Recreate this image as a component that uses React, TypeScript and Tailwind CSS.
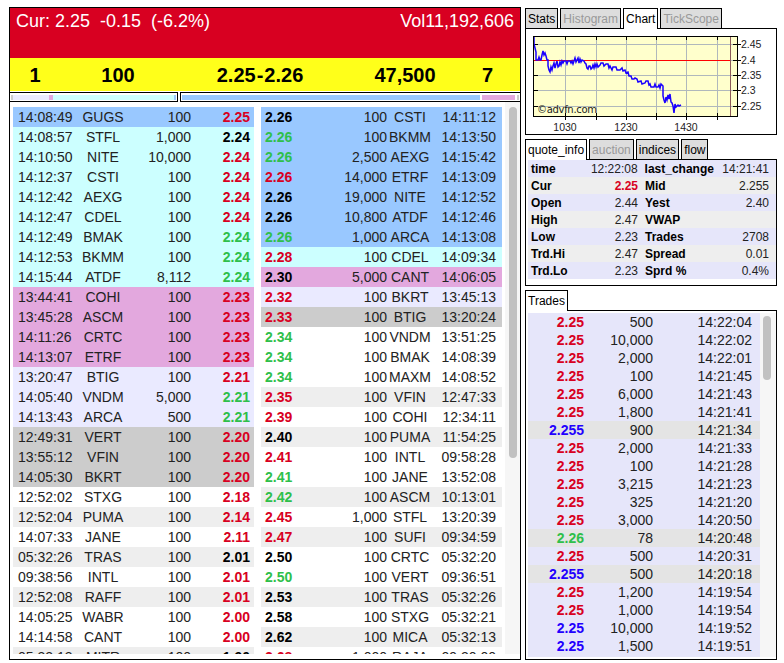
const FONT = "font-['Liberation_Sans',Arial,sans-serif]";

const RED = "text-[#d80021]";
const GREEN = "text-[#2fbf4a]";
const BLACK = "text-black";
const BLUE = "text-[#2200ff]";

const CYAN = "bg-[#ccffff]";
const SKY = "bg-[#99c8ff]";
const PINK = "bg-[#e3a8de]";
const LAV = "bg-[#eaeaff]";
const GREY = "bg-[#cccccc]";
const OFF = "bg-[#eeeeee]";
const WHITE = "bg-white";

type Row = [string, string, string, string, string, string];

const bids: Row[] = [
  ["14:08:49", "GUGS", "100", "2.25", RED, SKY],
  ["14:08:57", "STFL", "1,000", "2.24", BLACK, CYAN],
  ["14:10:50", "NITE", "10,000", "2.24", RED, CYAN],
  ["14:12:37", "CSTI", "100", "2.24", RED, CYAN],
  ["14:12:42", "AEXG", "100", "2.24", RED, CYAN],
  ["14:12:47", "CDEL", "100", "2.24", RED, CYAN],
  ["14:12:49", "BMAK", "100", "2.24", GREEN, CYAN],
  ["14:12:53", "BKMM", "100", "2.24", GREEN, CYAN],
  ["14:15:44", "ATDF", "8,112", "2.24", GREEN, CYAN],
  ["13:44:41", "COHI", "100", "2.23", RED, PINK],
  ["13:45:28", "ASCM", "100", "2.23", RED, PINK],
  ["14:11:26", "CRTC", "100", "2.23", RED, PINK],
  ["14:13:07", "ETRF", "100", "2.23", RED, PINK],
  ["13:20:47", "BTIG", "100", "2.21", RED, LAV],
  ["14:05:40", "VNDM", "5,000", "2.21", GREEN, LAV],
  ["14:13:43", "ARCA", "500", "2.21", GREEN, LAV],
  ["12:49:31", "VERT", "100", "2.20", RED, GREY],
  ["13:55:12", "VFIN", "100", "2.20", RED, GREY],
  ["14:05:30", "BKRT", "100", "2.20", RED, GREY],
  ["12:52:02", "STXG", "100", "2.18", RED, WHITE],
  ["12:52:04", "PUMA", "100", "2.14", RED, OFF],
  ["14:07:33", "JANE", "100", "2.11", RED, WHITE],
  ["05:32:26", "TRAS", "100", "2.01", BLACK, OFF],
  ["09:38:56", "INTL", "100", "2.01", RED, WHITE],
  ["12:52:08", "RAFF", "100", "2.01", RED, OFF],
  ["14:05:25", "WABR", "100", "2.00", RED, WHITE],
  ["14:14:58", "CANT", "100", "2.00", RED, WHITE],
  ["05:32:13", "MITR", "100", "1.90", BLACK, OFF],
];

const asks: Row[] = [
  ["2.26", "100", "CSTI", "14:11:12", BLACK, SKY],
  ["2.26", "100", "BKMM", "14:13:50", GREEN, SKY],
  ["2.26", "2,500", "AEXG", "14:15:42", GREEN, SKY],
  ["2.26", "14,000", "ETRF", "14:13:09", RED, SKY],
  ["2.26", "19,000", "NITE", "14:12:52", BLACK, SKY],
  ["2.26", "10,800", "ATDF", "14:12:46", BLACK, SKY],
  ["2.26", "1,000", "ARCA", "14:13:08", GREEN, SKY],
  ["2.28", "100", "CDEL", "14:09:34", RED, CYAN],
  ["2.30", "5,000", "CANT", "14:06:05", BLACK, PINK],
  ["2.32", "100", "BKRT", "13:45:13", RED, LAV],
  ["2.33", "100", "BTIG", "13:20:24", RED, GREY],
  ["2.34", "100", "VNDM", "13:51:25", GREEN, WHITE],
  ["2.34", "100", "BMAK", "14:08:39", GREEN, WHITE],
  ["2.34", "100", "MAXM", "14:08:52", GREEN, WHITE],
  ["2.35", "100", "VFIN", "12:47:33", RED, OFF],
  ["2.39", "100", "COHI", "12:34:11", RED, WHITE],
  ["2.40", "100", "PUMA", "11:54:25", BLACK, OFF],
  ["2.41", "100", "INTL", "09:58:28", RED, WHITE],
  ["2.41", "100", "JANE", "13:52:08", GREEN, WHITE],
  ["2.42", "100", "ASCM", "10:13:01", GREEN, OFF],
  ["2.45", "1,000", "STFL", "13:20:39", RED, WHITE],
  ["2.47", "100", "SUFI", "09:34:59", RED, OFF],
  ["2.50", "100", "CRTC", "05:32:20", BLACK, WHITE],
  ["2.50", "100", "VERT", "09:36:51", GREEN, WHITE],
  ["2.53", "100", "TRAS", "05:32:26", BLACK, OFF],
  ["2.58", "100", "STXG", "05:32:21", BLACK, WHITE],
  ["2.62", "100", "MICA", "05:32:13", BLACK, OFF],
  ["2.68", "1,000", "RAJA", "09:30:00", RED, WHITE],
];

const quote: [string, string, string, string, boolean][] = [
  ["time", "12:22:08", "last_change", "14:21:41", false],
  ["Cur", "2.25", "Mid", "2.255", true],
  ["Open", "2.44", "Yest", "2.40", false],
  ["High", "2.47", "VWAP", "", false],
  ["Low", "2.23", "Trades", "2708", false],
  ["Trd.Hi", "2.47", "Spread", "0.01", false],
  ["Trd.Lo", "2.23", "Sprd %", "0.4%", false],
];

const trades: [string, string, string, string, boolean][] = [
  ["2.25", "500", "14:22:04", RED, false],
  ["2.25", "10,000", "14:22:02", RED, false],
  ["2.25", "2,000", "14:22:01", RED, false],
  ["2.25", "100", "14:21:45", RED, false],
  ["2.25", "6,000", "14:21:43", RED, false],
  ["2.25", "1,800", "14:21:41", RED, false],
  ["2.255", "900", "14:21:34", BLUE, true],
  ["2.25", "2,000", "14:21:33", RED, false],
  ["2.25", "100", "14:21:28", RED, false],
  ["2.25", "3,215", "14:21:23", RED, false],
  ["2.25", "325", "14:21:20", RED, false],
  ["2.25", "3,000", "14:20:50", RED, false],
  ["2.26", "78", "14:20:48", GREEN, true],
  ["2.25", "500", "14:20:31", RED, false],
  ["2.255", "500", "14:20:18", BLUE, true],
  ["2.25", "1,200", "14:19:54", RED, false],
  ["2.25", "1,000", "14:19:54", RED, false],
  ["2.25", "10,000", "14:19:52", BLUE, false],
  ["2.25", "1,500", "14:19:51", BLUE, false],
];

const Tab = ({ label, active, disabled }: { label: string; active?: boolean; disabled?: boolean }) => (
  <div
    className={`flex items-center px-[2px] border border-black border-b-0 text-[12px] leading-none ${
      active ? "h-[21px] -mb-[1px] relative z-10 bg-white" : "h-5 bg-[#dddddd]"
    } ${disabled ? "text-[#999999]" : "text-black"}`}
  >
    {label}
  </div>
);

// price line, traced in page coordinates
const pricePoints =
  "534,37 534,44 535,48 536,52 536,60 538,60 539,57 540,60 541,60 542,55 543,51 544,55 545,53 546,56 547,60 548,60 548,66 549,70 550,72 551,67 552,70 553,66 554,63 555,68 556,64 557,61 558,67 559,66 560,62 561,65 562,61 563,63 564,61 566,61 567,64 568,61 570,61 571,63 572,61 573,64 574,61 575,58 576,62 577,60 578,58 579,63 580,59 581,62 582,60 584,61 585,63 586,64 587,68 588,69 589,66 590,66 591,69 592,68 593,65 594,68 595,64 596,67 597,64 598,67 600,65 601,63 603,63 604,66 606,64 608,64 609,68 610,66 612,70 613,67 614,67 616,67 617,70 620,70 622,68 623,71 625,70 626,73 628,72 629,76 631,76 632,79 634,79 635,78 637,79 638,82 641,81 642,84 645,83 646,81 648,81 649,85 650,84 651,87 654,87 655,84 656,87 658,87 659,85 660,88 661,84 663,86 663,96 664,100 665,103 666,97 667,100 668,95 669,99 670,94 671,102 672,103 673,106 674,113 675,104 676,107 678,105 679,106 681,105";

const Chart = () => (
  <svg width="250" height="105" viewBox="526 29 250 105" className="block">
    <rect x="533.5" y="36.5" width="204" height="80" fill="#ffffcc" />
    {[44.5, 60.5, 75.5, 90.5, 106.5].map((y) => (
      <g key={y}>
        <line x1="533" x2="738" y1={y} y2={y} stroke="#b0b8bc" />
        <line x1="534" x2="538" y1={y} y2={y} stroke="#000" />
        <line x1="733" x2="741" y1={y} y2={y} stroke="#000" />
      </g>
    ))}
    {[565.5, 596.5, 626.5, 656.5, 686.5, 717.5].map((x) => (
      <g key={x}>
        <line x1={x} x2={x} y1="36" y2="117" stroke="#b0b8bc" />
        <line x1={x} x2={x} y1="37" y2="40" stroke="#000" />
        <line x1={x} x2={x} y1="113" y2="120" stroke="#000" />
      </g>
    ))}
    <line x1="533" x2="731" y1="60.5" y2="60.5" stroke="#ff0000" />
    <line x1="730.5" x2="730.5" y1="36" y2="117" stroke="#8a5a5a" />
    <polyline fill="none" stroke="#1a00ff" strokeWidth="1.5" points={pricePoints} />
    <rect x="533.5" y="36.5" width="204" height="80" fill="none" stroke="#000" />
    <text x="537" y="112.5" fontSize="10" fill="#222222" fontFamily="DejaVu Sans" textLength="60">
      ©advfn.com
    </text>
    {[
      ["2.45", 48],
      ["2.4", 64],
      ["2.35", 79],
      ["2.3", 94],
      ["2.25", 110],
    ].map(([t, y]) => (
      <text key={t} x="741" y={y} fontSize="10.5" fill="#222222" fontFamily="Liberation Sans">
        {t}
      </text>
    ))}
    {[
      ["1030", 565],
      ["1230", 626],
      ["1430", 686],
    ].map(([t, x]) => (
      <text key={t} x={x} y="131" fontSize="10.5" fill="#222222" textAnchor="middle" fontFamily="Liberation Sans">
        {t}
      </text>
    ))}
  </svg>
);

const Bar = ({ w, c }: { w: string; c: string }) => <div className={`${w} ${c}`} />;

export default function App() {
  return (
    <div className={`${FONT} w-[784px] h-[663px] bg-white overflow-hidden flex gap-[4px] pl-[9px] pt-[7px]`}>
      <div className="w-[512px] h-[653px] border border-black flex flex-col overflow-hidden">
        <div className="h-[50px] bg-[#d80021] text-white text-[18px] leading-[21px] flex justify-between pl-[6px] pr-[6px] pt-[3px] whitespace-pre">
          <span>Cur: 2.25  -0.15  (-6.2%)</span>
          <span>Vol11,192,606</span>
        </div>
        <div className="h-[33px] bg-[#ffff1a] grid grid-cols-[50px_116px_168px_122px_43px] items-center font-bold text-[20px] text-black text-center">
          <span>1</span>
          <span>100</span>
          <span className="flex justify-center gap-[1px]">
            <span>2.25</span>
            <span>-</span>
            <span>2.26</span>
          </span>
          <span>47,500</span>
          <span>7</span>
        </div>
        <div className="flex h-[10px] mt-[1px] gap-[2px]">
          <div className="w-[168px] border-t border-b border-r border-black pl-[1px] pr-[1px] pt-[2px]">
            <div className="flex h-[5px]">
              <Bar w="w-[2px]" c={GREY} />
              <Bar w="w-[36px]" c={LAV} />
              <Bar w="w-[4px]" c={PINK} />
              <Bar w="w-[121px]" c={CYAN} />
              <Bar w="w-[2px]" c={SKY} />
            </div>
          </div>
          <div className="flex-1 border-t border-b border-l border-black pl-[1px] pt-[2px]">
            <div className="flex h-[5px]">
              <Bar w="w-[298px]" c={SKY} />
              <div className="w-[2px]" />
              <Bar w="w-[33px]" c={PINK} />
              <div className="w-[2px]" />
              <Bar w="w-[2px]" c={GREY} />
            </div>
          </div>
        </div>
        <div className="flex-1 flex overflow-hidden mb-[5px]">
          <div className="flex-1 flex overflow-hidden pt-[5px] pl-[3px]">
            <div className="w-[241px] shrink-0">
              {bids.map((r, i) => (
                <div key={i} className={`h-5 flex items-center text-[14px] text-[#222222] ${r[5]}`}>
                  <span className="w-[65px] pl-[5px]">{r[0]}</span>
                  <span className="w-[50px] text-center">{r[1]}</span>
                  <span className="w-[63px] text-right">{r[2]}</span>
                  <span className={`w-[59px] text-right font-bold ${r[4]}`}>{r[3]}</span>
                </div>
              ))}
            </div>
            <div className="w-[241px] shrink-0 ml-[7px]">
              {asks.map((r, i) => (
                <div key={i} className={`h-5 flex items-center text-[14px] text-[#222222] ${r[5]}`}>
                  <span className={`w-[34px] pl-[4px] font-bold ${r[4]}`}>{r[0]}</span>
                  <span className="w-[92px] text-right">{r[1]}</span>
                  <span className="w-[46px] text-center">{r[2]}</span>
                  <span className="w-[63px] text-right">{r[3]}</span>
                </div>
              ))}
            </div>
            <div className="w-[16px] shrink-0 ml-[3px] -mt-[5px] bg-[#f6f6f6] relative">
              <div className="absolute left-[4px] w-[8px] top-[5px] h-[351px] rounded-full bg-[#c1c1c1]" />
            </div>
          </div>
        </div>
      </div>

      <div className="w-[252px] h-[652px] mt-[1px] flex flex-col">
        <div className="flex gap-[2px] h-5 items-start">
          <Tab label="Stats" />
          <Tab label="Histogram" disabled />
          <Tab label="Chart" active />
          <Tab label="TickScope" disabled />
        </div>
        <div className="border border-black h-[107px]">
          <Chart />
        </div>
        <div className="flex gap-[2px] mt-[4px] h-5 items-start">
          <Tab label="quote_info" active />
          <Tab label="auction" disabled />
          <Tab label="indices" />
          <Tab label="flow" />
        </div>
        <div className="border border-black h-[127px] text-[12px] text-black">
          {quote.map((q, i) => (
            <div key={i} className={`h-[17px] flex items-center ml-[2px] pl-[3px] pr-[7px] ${i % 2 ? OFF : "bg-[#e6e6fa]"}`}>
              <span className="w-[54px] font-bold">{q[0]}</span>
              <span className={`w-[53px] text-right ${q[4] ? "font-bold " + RED : "text-[#222222]"}`}>{q[1]}</span>
              <span className="w-[78px] ml-[7px] font-bold">{q[2]}</span>
              <span className="flex-1 text-right text-[#222222]">{q[3]}</span>
            </div>
          ))}
        </div>
        <div className="mt-[4px] flex h-5 items-start">
          <Tab label="Trades" active />
        </div>
        <div className="flex-1 border border-black flex pl-[2px] pt-[2px] overflow-hidden">
          <div className="w-[232px] h-[344px] bg-[#e6e6fa]">
            {trades.map((t, i) => (
              <div key={i} className={`h-[18px] flex items-center text-[14px] text-[#222222] ${t[4] ? "bg-[#e4e4e4]" : ""}`}>
                <span className={`w-[56px] text-right font-bold ${t[3]}`}>{t[0]}</span>
                <span className="w-[69px] text-right">{t[1]}</span>
                <span className="w-[99px] text-right">{t[2]}</span>
              </div>
            ))}
          </div>
          <div className="w-[16px] h-[344px] bg-[#f6f6f6] relative">
            <div className="absolute left-[3px] w-[8px] top-[3px] h-[64px] rounded-full bg-[#c1c1c1]" />
          </div>
        </div>
      </div>
    </div>
  );
}
